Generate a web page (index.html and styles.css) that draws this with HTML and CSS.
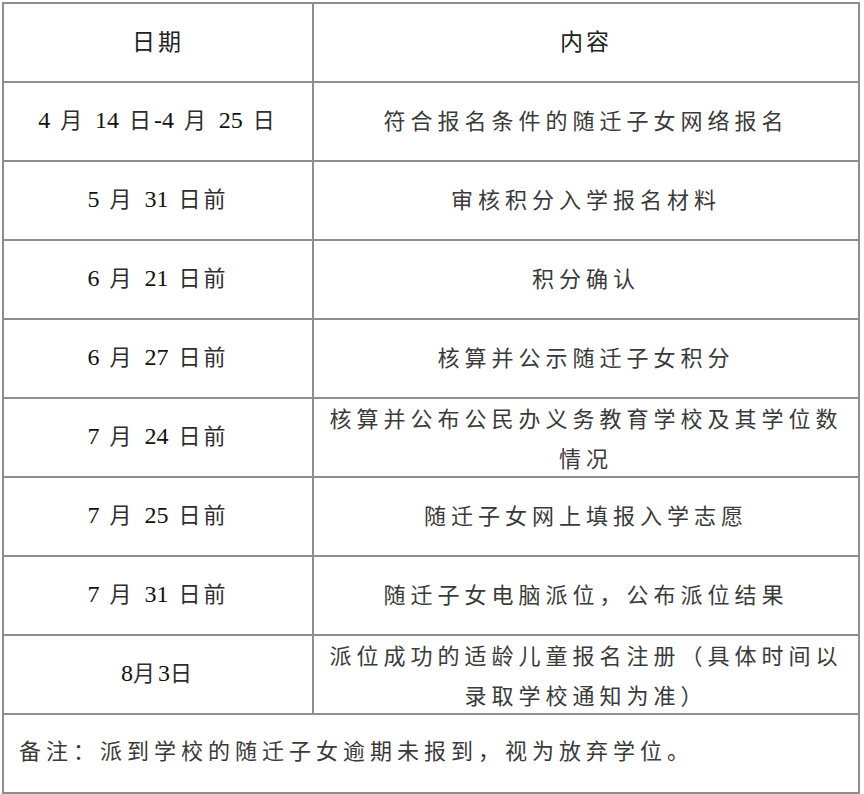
FILE: index.html
```html
<!DOCTYPE html>
<html lang="zh-CN">
<head>
<meta charset="utf-8">
<title>随迁子女入学时间安排</title>
<link rel="stylesheet" href="styles.css">
</head>
<body>
<table class="schedule">
  <colgroup>
    <col class="col-date">
    <col class="col-content">
  </colgroup>
  <thead>
    <tr>
      <th>日期</th>
      <th>内容</th>
    </tr>
  </thead>
  <tbody>
    <tr>
      <td class="date"><span class="num">4</span> 月 <span class="num">14</span> 日<span class="num">-4</span> 月 <span class="num">25</span> 日</td>
      <td>符合报名条件的随迁子女网络报名</td>
    </tr>
    <tr>
      <td class="date"><span class="num">5</span> 月 <span class="num">31</span> 日前</td>
      <td>审核积分入学报名材料</td>
    </tr>
    <tr>
      <td class="date"><span class="num">6</span> 月 <span class="num">21</span> 日前</td>
      <td>积分确认</td>
    </tr>
    <tr>
      <td class="date"><span class="num">6</span> 月 <span class="num">27</span> 日前</td>
      <td>核算并公示随迁子女积分</td>
    </tr>
    <tr>
      <td class="date"><span class="num">7</span> 月 <span class="num">24</span> 日前</td>
      <td><div class="multi">核算并公布公民办义务教育学校及其学位数情况</div></td>
    </tr>
    <tr>
      <td class="date"><span class="num">7</span> 月 <span class="num">25</span> 日前</td>
      <td>随迁子女网上填报入学志愿</td>
    </tr>
    <tr>
      <td class="date"><span class="num">7</span> 月 <span class="num">31</span> 日前</td>
      <td>随迁子女电脑派位，公布派位结果</td>
    </tr>
    <tr>
      <td class="date"><span class="num">8</span>月<span class="num">3</span>日</td>
      <td><div class="multi">派位成功的适龄儿童报名注册（具体时间以录取学校通知为准）</div></td>
    </tr>
    <tr>
      <td class="note" colspan="2">备注：派到学校的随迁子女逾期未报到，视为放弃学位。</td>
    </tr>
  </tbody>
</table>
</body>
</html>
```

FILE: styles.css
```css
html, body {
  margin: 0;
  padding: 0;
  background: #ffffff;
}

body {
  padding: 2px 0 0 2px;
}

.schedule {
  width: 858px;
  border-collapse: collapse;
  table-layout: fixed;
  border: 2px solid #8e8e8e;
  font-family: "Noto Sans CJK SC", sans-serif;
  font-size: 22px;
  color: #3a3a3a;
}

.col-date {
  width: 310px;
}

.schedule th,
.schedule td {
  border: 2px solid #8e8e8e;
  height: 71px;
  padding: 0 12px 6px;
  text-align: center;
  vertical-align: middle;
  font-weight: 400;
  letter-spacing: 5px;
  line-height: 40px;
}

.schedule th {
  font-size: 23px;
  color: #222222;
  letter-spacing: 3px;
}

.schedule .date {
  color: #2e2e2e;
  letter-spacing: 3px;
  word-spacing: 2px;
}

.num {
  font-family: "Liberation Serif", "Times New Roman", serif;
  font-size: 24px;
  letter-spacing: 0;
  color: #111111;
}

.multi {
  line-height: 40px;
  margin: -2px 0 -7px;
}

.schedule .note {
  text-align: left;
  height: 67px;
  padding-left: 15px;
  padding-bottom: 10px;
}
```
